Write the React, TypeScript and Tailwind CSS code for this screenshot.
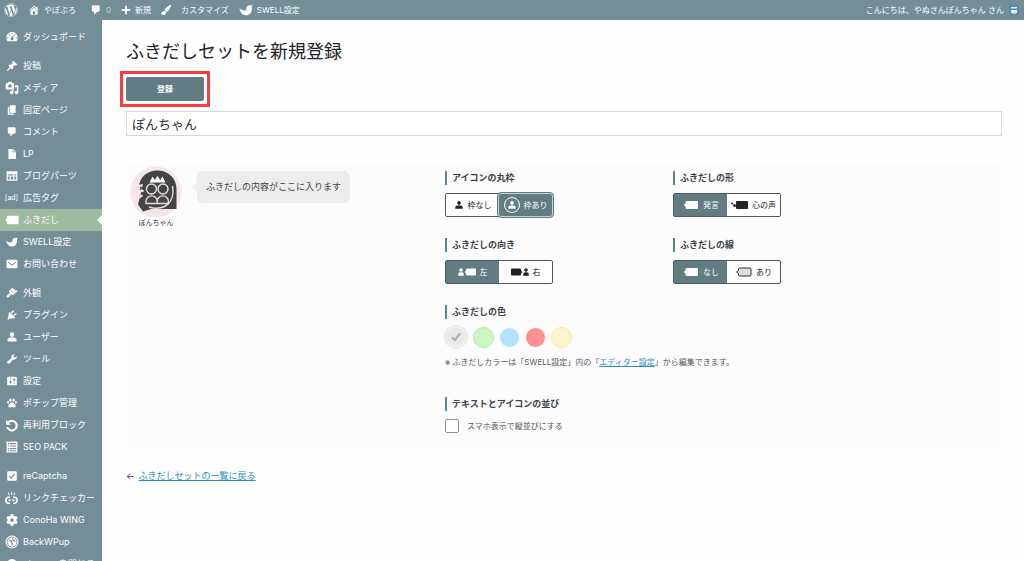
import React, { useState } from 'react';
import { FaCog, FaPaintBrush, FaPaw, FaWordpress } from 'react-icons/fa';

interface MenuEntry {
  label: string;
  icon: React.ReactNode;
  active?: boolean;
}

interface Option {
  value: string;
  label: string;
  icon: React.ReactNode;
}

const Glyph: React.FC<{ d: string; className?: string }> = ({ d, className = 'size-3' }) => (
  <svg viewBox="0 0 20 20" fill="currentColor" fillRule="evenodd" className={className} aria-hidden="true">
    <path d={d} />
  </svg>
);

const paths = {
  home: 'M16 8.5l1.53 1.53-1.06 1.06L10 4.6l-6.47 6.49-1.06-1.06L10 2.5l4 4v-2h2v4zm-6-2.46l6 5.99V18H4v-5.97zM12 17v-5H8v5h4z',
  comment: 'M5 2h9c1.1 0 2 .9 2 2v7c0 1.1-.9 2-2 2h-2l-5 5v-5H5c-1.1 0-2-.9-2-2V4c0-1.1.9-2 2-2z',
  plus: 'M8.2 1.5h3.600v6.700h6.700v3.600h-6.700v6.700H8.200v-6.700H1.500V8.200h6.700z',
  dashboard:
    'M3.76 16h12.48c1.1-1.37 1.76-3.11 1.76-5 0-4.42-3.58-8-8-8s-8 3.58-8 8c0 1.89.66 3.63 1.76 5zM10 4c.55 0 1 .45 1 1s-.45 1-1 1-1-.45-1-1 .45-1 1-1zM6 6c.55 0 1 .45 1 1s-.45 1-1 1-1-.45-1-1 .45-1 1-1zm8 0c.55 0 1 .45 1 1s-.45 1-1 1-1-.45-1-1 .45-1 1-1zm-5.37 5.55L12 7v6c0 1.1-.9 2-2 2s-2-.9-2-2c0-.57.24-1.08.63-1.45zM4 10c.55 0 1 .45 1 1s-.45 1-1 1-1-.45-1-1 .45-1 1-1zm12 0c.55 0 1 .45 1 1s-.45 1-1 1-1-.45-1-1 .45-1 1-1z',
  pin: 'M10.44 3.02l1.82-1.82 6.36 6.35-1.83 1.82c-1.05-.68-2.48-.57-3.41.36l-.75.75c-.92.93-1.04 2.35-.35 3.41l-1.83 1.82-2.41-2.41-2.8 2.79c-.42.42-3.38 2.71-3.8 2.29s1.86-3.39 2.28-3.81l2.79-2.79L4.1 9.36l1.83-1.82c1.05.69 2.48.57 3.4-.36l.75-.75c.93-.92 1.05-2.35.36-3.41z',
  media:
    'M13 11V4c0-.55-.45-1-1-1h-1.67L9 1H5L3.67 3H2c-.55 0-1 .45-1 1v7c0 .55.45 1 1 1h10c.55 0 1-.45 1-1zM7 4.5c1.38 0 2.5 1.12 2.5 2.5S8.38 9.5 7 9.5 4.5 8.38 4.5 7 5.62 4.5 7 4.5zM14 6h5v10.5c0 1.38-1.12 2.5-2.5 2.5S14 17.88 14 16.5s1.12-2.5 2.5-2.5c.17 0 .34.02.5.05V9h-3V6zm-4 8.05V13h2v3.5c0 1.38-1.12 2.5-2.5 2.5S7 17.88 7 16.5 8.12 14 9.5 14c.17 0 .34.02.5.05z',
  page: 'M6 15V2h10v13H6zm-1 1h8v2H3V5h2v11z',
  file: 'M4 1.5h7V7h5.5v11.5H4zM12 1.5L16.5 6H12z',
  parts: 'M1 2h18v16H1zM3 7v2h9V7zm11 0v2h3V7zM3 11v5h3v-5zm5 0v5h4v-5zm6 0v5h3v-5z',
  balloon: 'M4 4h14q1.5 0 1.5 1.5v9q0 1.5-1.5 1.5H4q-1.5 0-1.5-1.5V12L.5 10l2-2V5.500Q2.500 4 4 4z',
  bird: 'M.5 8C3 10 6.500 11 10.500 10.500 9.500 6 12.500 2.500 16.500 3.500l3-.5-1.300 3c1.300 7-3.200 12-9.200 11.500C4.500 17 1.500 13.500.5 8z',
  mail: 'M2 3h16q1 0 1 1v12q0 1-1 1H2q-1 0-1-1V4q0-1 1-1zm1.500 3v2l6.500 5 6.500-5V6L10 11z',
  appearance:
    'M14.48 11.06L7.41 3.99l1.5-1.5c.5-.56 2.3-.47 3.51.32 1.21.8 1.43 1.28 2.91 2.1 1.18.64 2.45 1.26 4.45.85zm-.71.71L6.7 4.7 4.93 6.47c-.39.39-.39 1.02 0 1.41l1.06 1.06c.39.39.39 1.03 0 1.42-.6.6-1.43 1.11-2.21 1.69-.35.26-.7.53-1.01.84C1.43 14.23.4 16.08 1.4 17.07c.99 1 2.84-.03 4.18-1.36.31-.31.58-.66.85-1.02.57-.78 1.08-1.61 1.69-2.21.39-.39 1.02-.39 1.41 0l1.06 1.06c.39.39 1.02.39 1.41 0z',
  plugin:
    'M13.11 4.36L9.87 7.6 8 5.73l3.24-3.24c.35-.34 1.05-.2 1.56.32.52.51.66 1.21.31 1.55zm-8 1.77l.91-1.12 9.01 9.01-1.19.84c-.71.71-2.63 1.16-3.82 1.16H6.14L4.9 17.26c-.59.59-1.54.59-2.12 0-.59-.58-.59-1.53 0-2.12l1.24-1.24v-3.88c0-1.13.4-3.19 1.09-3.89zm7.26 3.97l3.24-3.24c.34-.35 1.04-.21 1.55.31.52.51.66 1.21.31 1.55l-3.24 3.25z',
  user: 'M10 10C7.500 10 6.500 7.500 6.500 5.700 6.500 3.500 7.800 2 10 2s3.500 1.500 3.500 3.700C13.500 7.500 12.500 10 10 10zM7 11h6c2.500 0 4.500 1.800 4.500 4v2.500h-15V15c0-2.200 2-4 4.500-4z',
  tool: 'M16.68 9.77c-1.34 1.34-3.3 1.67-4.95.99l-5.41 6.52c-.99.99-2.59.99-3.58 0s-.99-2.59 0-3.57l6.52-5.42c-.68-1.65-.35-3.61.99-4.95 1.28-1.28 3.12-1.62 4.72-1.06l-2.89 2.89 2.82 2.82 2.86-2.87c.53 1.58.18 3.39-1.08 4.65z',
  settings:
    'M18 16V4c0-.55-.45-1-1-1H3c-.55 0-1 .45-1 1v12c0 .55.45 1 1 1h14c.55 0 1-.45 1-1zM8 11h1c.55 0 1 .45 1 1s-.45 1-1 1H8v1.5c0 .28-.22.5-.5.5s-.5-.22-.5-.5V13H6c-.55 0-1-.45-1-1s.45-1 1-1h1V5.5c0-.28.22-.5.5-.5s.5.22.5.5V11zm5-2h-1c-.55 0-1-.45-1-1s.45-1 1-1h1V5.5c0-.28.22-.5.5-.5s.5.22.5.5V7h1c.55 0 1 .45 1 1s-.45 1-1 1h-1v5.5c0 .28-.22.5-.5.5s-.5-.22-.5-.5V9z',
  reuse: 'M1.500 2.500L4 5a8.300 8.300 0 1 1-2.200 8.200l2.800-.7A5.400 5.400 0 1 0 6 7l2.500 2.500h-7z',
  list: 'M1 1h18v18H1zM3 3.500v1.800h2V3.500zm3.500 0v1.800H17V3.500zM3 7.500v1.800h2V7.500zm3.500 0v1.800H17V7.500zM3 11.500v1.800h2v-1.800zm3.500 0v1.800H17v-1.800zM3 15.500v1.500h2v-1.500zm3.500 0v1.500H17v-1.500z',
  check: 'M4 2h12q2 0 2 2v12q0 2-2 2H4q-2 0-2-2V4q0-2 2-2zm2 7.500L4.700 11l4 4L15.500 7 14 5.700 8.600 12z',
  collapse: 'M10 1.500a8.500 8.500 0 1 1 0 17 8.500 8.500 0 0 1 0-17zM12.500 5.500L6.500 10l6 4.500z',
};

const BrokenLink = () => (
  <svg viewBox="0 0 20 20" fill="none" stroke="currentColor" strokeWidth="2.2" className="size-4" aria-hidden="true">
    <path d="M8 9H6.500a4 4 0 0 0 0 8H8M12 9h1.500a4 4 0 0 1 0 8H12M6 13h3M11 13h3" />
    <path strokeWidth="1.500" d="M10 2v4M5.500 3l1.500 3M14.500 3L13 6" />
  </svg>
);

const Globe = () => (
  <svg viewBox="0 0 20 20" className="size-3.5" aria-hidden="true">
    <circle cx="10" cy="10" r="8.500" fill="none" stroke="currentColor" strokeWidth="1.500" />
    <circle cx="10" cy="10" r="6.500" fill="currentColor" />
    <path d="M5.500 7.500c2 0 4 .5 4 3 0 1.500 1.500 2 1.500 4M11 5c0 2 1.500 3.500 4 4" fill="none" stroke="#738e96" strokeWidth="1.800" />
  </svg>
);

const menuGroups: MenuEntry[][] = [
  [{ label: 'ダッシュボード', icon: <Glyph d={paths.dashboard} className="size-3.5" /> }],
  [
    { label: '投稿', icon: <Glyph d={paths.pin} /> },
    { label: 'メディア', icon: <Glyph d={paths.media} className="size-3.5" /> },
    { label: '固定ページ', icon: <Glyph d={paths.page} /> },
    { label: 'コメント', icon: <Glyph d={paths.comment} /> },
    { label: 'LP', icon: <Glyph d={paths.file} /> },
    { label: 'ブログパーツ', icon: <Glyph d={paths.parts} /> },
    { label: '広告タグ', icon: <span className="text-[7px]">[ad]</span> },
    { label: 'ふきだし', icon: <Glyph d={paths.balloon} className="size-3.5" />, active: true },
    { label: 'SWELL設定', icon: <Glyph d={paths.bird} /> },
    { label: 'お問い合わせ', icon: <Glyph d={paths.mail} /> },
  ],
  [
    { label: '外観', icon: <Glyph d={paths.appearance} /> },
    { label: 'プラグイン', icon: <Glyph d={paths.plugin} /> },
    { label: 'ユーザー', icon: <Glyph d={paths.user} /> },
    { label: 'ツール', icon: <Glyph d={paths.tool} /> },
    { label: '設定', icon: <Glyph d={paths.settings} /> },
    { label: 'ポチップ管理', icon: <FaPaw className="size-2.5" /> },
    { label: '再利用ブロック', icon: <Glyph d={paths.reuse} className="size-3.5" /> },
    { label: 'SEO PACK', icon: <Glyph d={paths.list} /> },
  ],
  [
    { label: 'reCaptcha', icon: <Glyph d={paths.check} /> },
    { label: 'リンクチェッカー', icon: <BrokenLink /> },
    { label: 'ConoHa WING', icon: <FaCog className="size-3" /> },
    { label: 'BackWPup', icon: <Globe /> },
    { label: 'メニューを閉じる', icon: <Glyph d={paths.collapse} /> },
  ],
];

const BalloonIcon: React.FC<{ thought?: boolean; outline?: boolean }> = ({ thought, outline }) => (
  <svg viewBox="0 0 17 10" className="h-2.5 w-[17px]" fill="currentColor" aria-hidden="true">
    {thought ? (
      <>
        <rect x="5" y="1" width="12" height="8" rx="1" />
        <circle cx="3.500" cy="5.500" r="1.500" />
        <circle cx="1" cy="3.500" r="1" />
      </>
    ) : (
      <path
        d="M4.500 1h10.500q1 0 1 1v6q0 1-1 1H4.500q-1 0-1-1V6.500L1.500 5l2-1.500V2q0-1 1-1z"
        fill={outline ? '#ddd' : 'currentColor'}
        stroke={outline ? '#333' : 'none'}
      />
    )}
  </svg>
);

const DirectionIcon: React.FC<{ right?: boolean }> = ({ right }) => (
  <svg viewBox="0 0 18 10" className="h-2.5 w-[18px]" fill="currentColor" aria-hidden="true">
    <g transform={right ? 'translate(18 0) scale(-1 1)' : undefined}>
      <circle cx="3" cy="3" r="1.800" />
      <path d="M.2 8.700V7.500Q.2 5.300 2 5.200h2q1.800.1 1.800 2.300v1.200z" />
      <path d="M9 1.500h8q1 0 1 1v5q0 1-1 1H9q-1 0-1-1V6.500L6.500 5 8 3.500v-1q0-1 1-1z" />
    </g>
  </svg>
);

const framedUser = (
  <span className="flex size-4 items-center justify-center rounded-full border border-white">
    <Glyph d={paths.user} className="size-2.5" />
  </span>
);

const Heading: React.FC<{ children: React.ReactNode }> = ({ children }) => (
  <h2 className="h-3.5 border-l-2 border-[#5d8292] pl-[5px] text-[9px] leading-[14px] font-bold text-[#3c434a]">
    {children}
  </h2>
);

const Choice: React.FC<{ name: string; title: string; options: Option[]; initial: string; focused?: boolean }> = ({
  name,
  title,
  options,
  initial,
  focused,
}) => {
  const [value, setValue] = useState(initial);

  return (
    <section>
      <Heading>{title}</Heading>
      <div className="mt-2 flex h-6 w-[108px] rounded-xs border border-[#50575e] bg-white" role="radiogroup" aria-label={title}>
        {options.map(option => {
          const on = value === option.value;
          return (
            <label
              key={option.value}
              className={`flex flex-1 items-center justify-center gap-1 text-[8px] whitespace-nowrap ${
                on ? 'bg-[#627c83] text-white' : 'text-[#222]'
              } ${on && focused ? 'rounded-xs ring-1 ring-[#c3d0d4] outline-1 outline-offset-1 outline-[#627c83]' : ''}`}
            >
              <input
                type="radio"
                name={name}
                value={option.value}
                checked={on}
                onChange={() => setValue(option.value)}
                className="sr-only"
              />
              {option.icon}
              {option.label}
            </label>
          );
        })}
      </div>
    </section>
  );
};

const colors = [
  { name: 'グレー', className: 'bg-[#f0f0f0] border-[#e6e6e6]' },
  { name: 'グリーン', className: 'bg-[#cdf7c0] border-[#b0e8a4]' },
  { name: 'ブルー', className: 'bg-[#b3e2fb] border-[#fcfcfc]' },
  { name: 'レッド', className: 'bg-[#ff8f90] border-[#fcfcfc]' },
  { name: 'イエロー', className: 'bg-[#fbf5c9] border-[#f7e9a4]' },
];

const ColorPicker = () => {
  const [color, setColor] = useState('グレー');

  return (
    <div className="-ml-px flex h-6 items-center gap-[5px]">
      {colors.map(c => (
        <label
          key={c.name}
          className={`flex items-center justify-center rounded-full border ${c.className} ${
            color === c.name ? 'size-6' : 'size-[21px]'
          }`}
        >
          <input
            type="radio"
            name="color"
            aria-label={c.name}
            checked={color === c.name}
            onChange={() => setColor(c.name)}
            className="sr-only"
          />
          {color === c.name && (
            <span className="flex size-[18px] items-center justify-center rounded-full bg-[#e8e8e8]">
              <svg viewBox="0 0 10 10" className="size-2.5" fill="none" stroke="#b0b0b0" strokeWidth="2.200">
                <path d="M1 5.500L3.800 8.200 9 1.500" />
              </svg>
            </span>
          )}
        </label>
      ))}
    </div>
  );
};

const Avatar = () => (
  <svg viewBox="0 0 52 52" className="size-[52px]" role="img" aria-label="アイコン">
    <circle cx="26" cy="26" r="25.500" fill="#f5e6e8" />
    <path d="M9 22C9 11 17 4.500 27.500 4.500S46.500 12 46.500 23v20H21l-8 2.500-5-7 2-8z" fill="#444" />
    <path d="M19.500 16.500l3-6 2.300 3.500 2.700-4 2.700 4 2.300-3.500 3 6z" fill="#fff" />
    <g fill="none" stroke="#e9dfe0" strokeWidth="1.400">
      <circle cx="21.500" cy="23" r="5" />
      <circle cx="33" cy="23" r="5" />
      <path d="M16 38v-2.500a5.600 5.600 0 0 1 11.200 0V38M27.200 38v-2.500a5.600 5.600 0 0 1 11.200 0V38M15.500 37.500h23.500" />
      <path d="M42.500 20c1.500 9-1 17-8 20.500-5.500 2.500-11 2-15.500.5" />
    </g>
    <path d="M8 19l5-1-1.500 5 3 2-3.500 2 2 3-4 3 1-4-3-2z" fill="#f5e6e8" />
    <path d="M10 21l1.500 1-1.500 2M12 26l-1 3M15.500 27l-1.500 5" fill="none" stroke="#444" strokeWidth="1.200" />
  </svg>
);

const App: React.FC = () => {
  const [name, setName] = useState('ぽんちゃん');

  return (
    <div className="flex h-screen flex-col overflow-hidden bg-[#fefefe] font-['Inter','Noto_Sans_CJK_JP',sans-serif] text-[#3c434a]">
      <header className="flex h-5 shrink-0 items-center bg-[#738e96] px-1 text-[8px] text-white">
        <nav className="flex items-center gap-2.5">
          <a href="#wp" aria-label="WordPress">
            <FaWordpress className="size-3.5" />
          </a>
          <a href="#site" className="flex items-center gap-1">
            <Glyph d={paths.home} />
            やぽぶろ
          </a>
          <a href="#comments" className="flex items-center gap-1 pl-1">
            <Glyph d={paths.comment} />
            <span className="text-white/60">0</span>
          </a>
          <a href="#new" className="flex items-center gap-1">
            <Glyph d={paths.plus} className="size-2.5" />
            新規
          </a>
          <a href="#customize" className="flex items-center gap-2.5">
            <FaPaintBrush className="size-2.5" />
            カスタマイズ
          </a>
          <a href="#swell" className="flex items-center gap-1">
            <Glyph d={paths.bird} className="size-3.5" />
            SWELL設定
          </a>
        </nav>
        <a href="#profile" className="ml-auto flex items-center gap-1">
          こんにちは、やぬさんぽんちゃん さん
          <svg viewBox="0 0 12 12" className="size-3" aria-hidden="true">
            <rect x="1" y="1" width="10" height="10" rx="2" fill="#5589b5" />
            <path d="M3 3h6v1.500H3zM3 6h6v2q0 1.500-3 1.500T3 8z" fill="#e4eff8" />
          </svg>
        </a>
      </header>

      <div className="flex min-h-0 flex-1">
        <nav className="flex w-[102px] shrink-0 flex-col gap-[7px] overflow-hidden bg-[#738e96] pt-1.5 text-[9px] text-white">
          {menuGroups.map((group, i) => (
            <ul key={i} className="shrink-0">
              {group.map(entry => (
                <li key={entry.label}>
                  <a
                    href={`#${entry.label}`}
                    className={`relative flex h-[22px] items-center gap-1 pl-1 whitespace-nowrap ${
                      entry.active ? 'bg-[#9ebb9f]' : ''
                    }`}
                  >
                    <span className="flex w-[15px] shrink-0 items-center justify-center">{entry.icon}</span>
                    {entry.label}
                    {entry.active && (
                      <span className="absolute top-1.5 right-0 border-y-5 border-r-5 border-y-transparent border-r-[#fefefe]" />
                    )}
                  </a>
                </li>
              ))}
            </ul>
          ))}
        </nav>

        <main className="min-w-0 flex-1 overflow-hidden pt-5 pr-[22px] pl-6">
          <h1 className="text-[18px] leading-6 text-[#1d2327]">ふきだしセットを新規登録</h1>

          <div className="mt-[7px] -ml-1.5 w-fit border-3 border-[#f73e3e] p-[3px]">
            <button type="button" className="block h-6 w-[78px] rounded-xs bg-[#627c83] text-[8px] font-bold text-white">
              登録
            </button>
          </div>

          <input
            type="text"
            aria-label="ふきだしセット名"
            value={name}
            onChange={e => setName(e.target.value)}
            className="mt-1 block h-[25px] w-full border border-[#d5d7da] bg-white px-[5px] text-[13px] text-[#2c3338]"
          />

          <div className="mt-7 grid grid-cols-[319px_1fr] bg-[#fcfcfc] pt-[7px] pb-3.5">
            <div className="flex items-start pl-1">
              <figure className="-mt-[5px] flex flex-col items-center">
                <Avatar />
                <figcaption className="text-[7px] leading-[10px]">{name}</figcaption>
              </figure>
              <div className="relative ml-[15px] flex h-8 items-center rounded-md bg-[#ededed] px-[9px] text-[9px]">
                ふきだしの内容がここに入ります
                <span className="absolute top-[11px] -left-[5px] border-y-5 border-r-5 border-y-transparent border-r-[#ededed]" />
              </div>
            </div>

            <div>
              <div className="grid grid-cols-[228px_1fr] gap-y-[21px]">
                <Choice
                  name="frame"
                  title="アイコンの丸枠"
                  initial="on"
                  focused
                  options={[
                    { value: 'off', label: '枠なし', icon: <Glyph d={paths.user} className="size-2.5" /> },
                    { value: 'on', label: '枠あり', icon: framedUser },
                  ]}
                />
                <Choice
                  name="shape"
                  title="ふきだしの形"
                  initial="speech"
                  options={[
                    { value: 'speech', label: '発言', icon: <BalloonIcon /> },
                    { value: 'thought', label: '心の声', icon: <BalloonIcon thought /> },
                  ]}
                />
                <Choice
                  name="direction"
                  title="ふきだしの向き"
                  initial="left"
                  options={[
                    { value: 'left', label: '左', icon: <DirectionIcon /> },
                    { value: 'right', label: '右', icon: <DirectionIcon right /> },
                  ]}
                />
                <Choice
                  name="line"
                  title="ふきだしの線"
                  initial="none"
                  options={[
                    { value: 'none', label: 'なし', icon: <BalloonIcon /> },
                    { value: 'on', label: 'あり', icon: <BalloonIcon outline /> },
                  ]}
                />
              </div>

              <section className="mt-[21px] flex flex-col gap-1.5">
                <Heading>ふきだしの色</Heading>
                <ColorPicker />
                <p className="text-[8px] leading-[14px] text-[#50575e]">
                  ※ ふきだしカラーは「SWELL設定」内の「
                  <a href="#editor" className="text-[#2a8ec4] underline">
                    エディター設定
                  </a>
                  」から編集できます。
                </p>
              </section>

              <section className="mt-7 flex flex-col gap-2">
                <Heading>テキストとアイコンの並び</Heading>
                <label className="flex items-center gap-2 text-[8px] leading-[14px] text-[#50575e]">
                  <input type="checkbox" className="size-3.5 appearance-none rounded-xs border border-[#8c8f94] bg-white" />
                  スマホ表示で縦並びにする
                </label>
              </section>
            </div>
          </div>

          <p className="mt-[22px] flex items-center gap-1 text-[9px] leading-[14px]">
            <span>←</span>
            <a href="#list" className="text-[#2a8ec4] underline">
              ふきだしセットの一覧に戻る
            </a>
          </p>
        </main>
      </div>
    </div>
  );
};

export default App;
